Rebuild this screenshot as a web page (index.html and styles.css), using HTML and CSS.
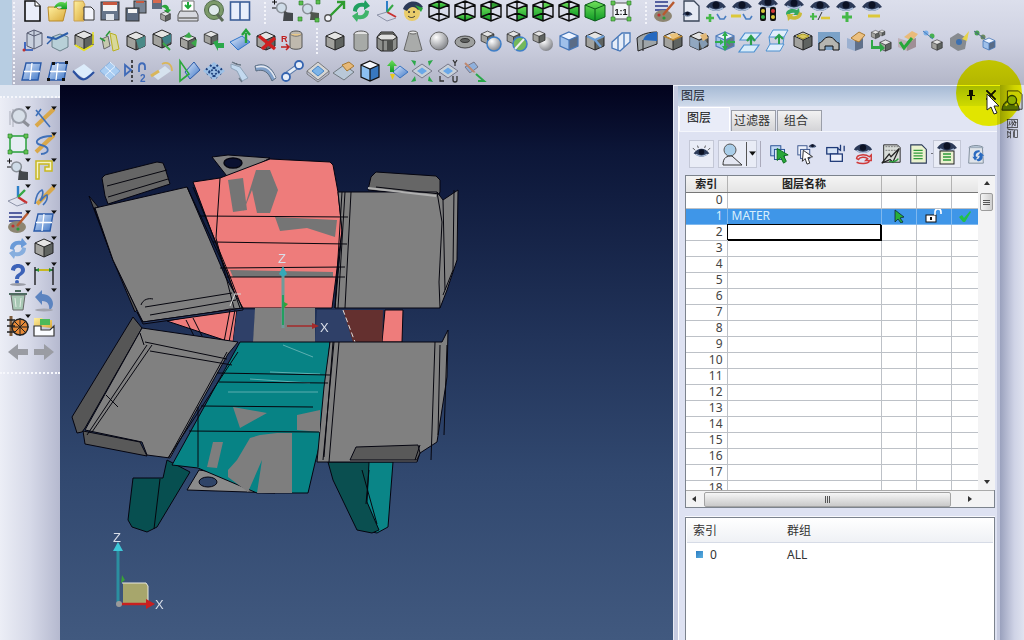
FILE: index.html
```html
<!DOCTYPE html>
<html lang="zh">
<head>
<meta charset="utf-8">
<title>图层</title>
<link rel="stylesheet" href="styles.css">
</head>
<body>
<svg class="defs" width="0" height="0">
<defs>
<linearGradient id="gb" x1="0" y1="0" x2="1" y2="1"><stop offset="0" stop-color="#dfe9fa"/><stop offset="1" stop-color="#3f78c8"/></linearGradient>
<linearGradient id="gg" x1="0" y1="0" x2="0" y2="1"><stop offset="0" stop-color="#6fe05a"/><stop offset="1" stop-color="#0f9a25"/></linearGradient>
<linearGradient id="gy" x1="0" y1="0" x2="1" y2="1"><stop offset="0" stop-color="#fff0a0"/><stop offset="1" stop-color="#d9a93a"/></linearGradient>
<radialGradient id="gs" cx=".35" cy=".3" r=".8"><stop offset="0" stop-color="#fff"/><stop offset="1" stop-color="#77797f"/></radialGradient>
<symbol id="cube" viewBox="0 0 24 24"><path d="M12 3l9 4-9 4-9-4z" fill="#e4e4e4"/><path d="M3 7l9 4v10l-9-4z" fill="#a2a29e"/><path d="M21 7l-9 4v10l9-4z" fill="#5f6360"/><path d="M12 3l9 4v10l-9 4-9-4V7zM3 7l9 4 9-4M12 11v10" fill="none" stroke="#222" stroke-width="1"/></symbol>
<symbol id="bcube" viewBox="0 0 24 24"><path d="M12 3l9 4-9 4-9-4z" fill="#eef4ff"/><path d="M3 7l9 4v10l-9-4z" fill="#9fc0ea"/><path d="M21 7l-9 4v10l9-4z" fill="#5a6c86"/><path d="M12 3l9 4v10l-9 4-9-4V7zM3 7l9 4 9-4M12 11v10" fill="none" stroke="#4576b8" stroke-width="1.2"/></symbol>
<symbol id="wc" viewBox="0 0 24 24"><path d="M12 2l10 4v12l-10 4-10-4V6zM2 6l10 4 10-4M12 10v12M2 18l10-4 10 4M12 2v12" fill="none" stroke="#0a0a0a" stroke-width="1.4"/></symbol>
<symbol id="eye" viewBox="0 0 24 24"><path d="M2 9c5-8 15-8 20 0-3 1-5 4-10 4S5 10 2 9z" fill="#2c3a58"/><path d="M5 10c4 3 10 3 14 0" fill="none" stroke="#a9bcd8" stroke-width="1.6"/><ellipse cx="12" cy="7" rx="3.5" ry="3.5" fill="#0c1224"/></symbol>
<symbol id="plane" viewBox="0 0 24 24"><path d="M6 4h15l-3 17H2z" fill="url(#gb)" stroke="#2a5aa8" stroke-width="1.4"/><path d="M4 12.5h16M12 4l-2 17" stroke="#fff" stroke-width="1.3"/></symbol>
<symbol id="mag" viewBox="0 0 24 24"><circle cx="10" cy="9" r="6.5" fill="#cfdce8" stroke="#8a9098" stroke-width="2"/><path d="M14 14l7 7" stroke="#555" stroke-width="3"/></symbol>
<symbol id="tri" viewBox="0 0 8 5"><path d="M0 0h8L4 5z" fill="#111"/></symbol>
<symbol id="arrow" viewBox="0 0 24 24"><path d="M12 2l8 8h-5v6H9v-6H4z" fill="url(#gg)" stroke="#0c7a1f" stroke-width=".8"/></symbol>
</defs>
</svg>

<div class="app">
<header class="toolbar">
<div class="tb-row first">
<i class="grip"></i>
<span class="cell"><svg class="ic" viewBox="0 0 24 24"><path d="M5 2h10l5 5v15H5z" fill="#eaeefa" stroke="#111" stroke-width="1.6"/><path d="M15 2v5h5" fill="#fff" stroke="#111"/></svg></span>
<span class="cell"><svg class="ic" viewBox="0 0 24 24"><path d="M2 8h8l2 2h8l-3 12H3z" fill="url(#gy)" stroke="#b98a2a"/><path d="M8 9c2-6 8-7 11-5l2-2v8h-7l2-2c-3-1-5 0-8 1z" fill="url(#gg)"/></svg></span>
<span class="cell"><svg class="ic" viewBox="0 0 24 24"><path d="M2 2h9l2 4-2 4 2 4-2 4 1 4H2z" fill="url(#gy)" stroke="#c9a050"/><path d="M12 8h7l3 3v10H12z" fill="#f1f3fa" stroke="#333"/></svg></span>
<span class="cell"><svg class="ic" viewBox="0 0 24 24"><rect x="3" y="3" width="18" height="18" fill="#66758a" stroke="#333"/><rect x="5" y="3" width="14" height="3" fill="#c85a40"/><rect x="5" y="6" width="14" height="6" fill="#f4f4f4"/><rect x="8" y="15" width="8" height="6" fill="#dfe3ea"/></svg></span>
<span class="cell"><svg class="ic" viewBox="0 0 24 24"><rect x="10" y="2" width="12" height="12" fill="#7a8595" stroke="#333"/><rect x="12" y="2" width="8" height="2" fill="#c85a40"/><rect x="2" y="9" width="13" height="13" fill="#5d6b80" stroke="#333"/><rect x="4" y="10" width="9" height="4" fill="#f4f4f4"/></svg></span>
<span class="cell"><svg class="ic" viewBox="0 0 24 24"><rect x="2" y="1" width="10" height="9" fill="#5d6b80"/><rect x="3" y="1" width="8" height="3" fill="#d56a50"/><path d="M11 8c3-4 8-2 8 2l2 1-4 4-3-4h2c0-2-3-3-5-3z" fill="#2aa83a"/><use href="#cube" x="9" y="11" width="13" height="13"/></svg></span>
<span class="cell"><svg class="ic" viewBox="0 0 24 24"><path d="M4 12h16l2 4v6H2v-6z" fill="#d7d9df" stroke="#555"/><path d="M6 2h12v10H6z" fill="#fff" stroke="#777"/><path d="M12 3v5M9 6l3 3 3-3" stroke="#1fa83a" stroke-width="2" fill="none"/><rect x="2" y="18" width="20" height="2" fill="#888"/></svg></span>
<span class="cell"><svg class="ic" viewBox="0 0 24 24"><circle cx="12" cy="11" r="9.5" fill="#7c9a6a" stroke="#557050"/><circle cx="12" cy="11" r="5.5" fill="#dfe9ec" stroke="#456040"/><path d="M15 15l6 7" stroke="#5a6a56" stroke-width="3"/></svg></span>
<span class="cell"><svg class="ic" viewBox="0 0 24 24"><rect x="2.5" y="3" width="19" height="18" fill="#e8effb" stroke="#3c5f98" stroke-width="1.6"/><path d="M12 3v18" stroke="#3c5f98" stroke-width="1.6"/></svg></span>
<i class="grip"></i>
<span class="cell"><svg class="ic" viewBox="0 0 24 24"><path d="M1 3h5M3.500 .5v5M1 9h5" stroke="#111"/><use href="#mag" x="3" y="2" width="18" height="18"/><path d="M13 13l9 1v8H12z" fill="#44484c"/></svg></span>
<span class="cell"><svg class="ic" viewBox="0 0 24 24"><use href="#mag" x="3" y="3" width="18" height="18"/><path d="M14 13l8 1v7h-9z" fill="#50564f"/><path d="M2 2h4v4H2zM19 1h4v4h-4zM1 18h4v4H1zM18 19h4v4h-4z" fill="#5bbf4e" stroke="#2a7a2a" stroke-width=".6"/></svg></span>
<span class="cell"><svg class="ic" viewBox="0 0 24 24"><path d="M5 19L20 4M14 3h7v7" fill="none" stroke="#2e9c2f" stroke-width="2.4"/><circle cx="5" cy="19" r="3.200" fill="#f3f5fa" stroke="#555" stroke-width="1.400"/></svg></span>
<span class="cell"><svg class="ic" viewBox="0 0 24 24"><path d="M4 12C4 6 9 3 15 4l1-3 5 6-6 4 0-3c-4-1-7 1-7 5z" fill="#20a060"/><path d="M20 12c0 6-5 9-11 8l-1 3-5-6 6-4 0 3c4 1 7-1 7-5z" fill="#3fb46a"/></svg></span>
<span class="cell"><svg class="ic" viewBox="0 0 24 24"><path d="M12 13V2" stroke="#2d7fc8" stroke-width="2"/><path d="M12 13l9 5" stroke="#c83030" stroke-width="2"/><path d="M12 13l6-7" stroke="#35a845" stroke-width="2"/><path d="M12 13L2 16l10 6 9-3" fill="none" stroke="#8d93a8"/></svg></span>
<span class="cell"><svg class="ic" viewBox="0 0 24 24"><circle cx="11" cy="14" r="8" fill="#e9cc6a"/><path d="M2 10C5 1 17 0 22 8l-5 3c-3-4-8-4-11 1z" fill="#2c3a58"/><path d="M14 6l8 3-2 4" fill="#2aa83a"/><circle cx="8" cy="13" r="1" fill="#333"/><circle cx="13" cy="13" r="1" fill="#333"/><path d="M7 17c2 2 5 2 7 0" fill="none" stroke="#333"/></svg></span>
<span class="cell"><svg class="ic" viewBox="0 0 24 24"><path d="M12 2l10 4-10 4L2 6z" fill="url(#gg)"/><use href="#wc"/></svg></span>
<span class="cell"><svg class="ic" viewBox="0 0 24 24"><path d="M12 14l10 4-10 4-10-4z" fill="url(#gg)"/><use href="#wc"/></svg></span>
<span class="cell"><svg class="ic" viewBox="0 0 24 24"><path d="M2 6l10 4v12L2 18z" fill="url(#gg)"/><path d="M12 2l10 4-10 4z" fill="#2f9c2f"/><use href="#wc"/></svg></span>
<span class="cell"><svg class="ic" viewBox="0 0 24 24"><path d="M22 6l-10 4v12l10-4z" fill="url(#gg)"/><use href="#wc"/></svg></span>
<span class="cell"><svg class="ic" viewBox="0 0 24 24"><path d="M2 6l10 4v12L2 18zM12 2l10 4-10 4z" fill="url(#gg)"/><use href="#wc"/></svg></span>
<span class="cell"><svg class="ic" viewBox="0 0 24 24"><path d="M22 6l-10 4v4l10 4zM2 6l10-4v8z" fill="url(#gg)"/><use href="#wc"/></svg></span>
<span class="cell"><svg class="ic" viewBox="0 0 24 24"><path d="M12 2l10 4v12l-10 4-10-4V6z" fill="url(#gg)" stroke="#0a5a18"/><path d="M2 6l10 4 10-4M12 10v12" fill="none" stroke="#0a5a18"/></svg></span>
<span class="cell"><svg class="ic" viewBox="0 0 24 24"><rect x="4" y="4" width="16" height="16" fill="#f2f4f8" stroke="#555"/><path d="M2 2h4v4H2zM18 2h4v4h-4zM2 18h4v4H2zM18 18h4v4h-4z" fill="#63c452" stroke="#2a7a2a" stroke-width=".6"/><text class="one" x="12" y="16">1:1</text></svg></span>
<i class="grip"></i>
<span class="cell"><svg class="ic" viewBox="0 0 24 24"><path d="M3 3h13M3 7h13M3 11h13" stroke="#5560a0" stroke-width="2"/><ellipse cx="11" cy="17" rx="9" ry="6" fill="#8d8572"/><circle cx="7" cy="16" r="1.600" fill="#c03030"/><circle cx="12" cy="19" r="1.600" fill="#2a9a3a"/><path d="M22 3L11 16" stroke="#b85a30" stroke-width="2.400"/></svg></span>
<span class="cell"><svg class="ic" viewBox="0 0 24 24"><path d="M6 2h10l5 5v15H6z" fill="#e6eaf4" stroke="#3a4658" stroke-width="1.300"/><use href="#eye" x="2" y="11" width="15" height="12"/></svg></span>
<span class="cell"><svg class="ic" viewBox="0 0 24 24"><use href="#eye" y="-1"/><path d="M6 15v8M2 19h8" stroke="#45b848" stroke-width="2.600"/><path d="M13 15l3 5h4l2-3" fill="none" stroke="#4a7ec0" stroke-width="1.600"/></svg></span>
<span class="cell"><svg class="ic" viewBox="0 0 24 24"><use href="#eye" y="-1"/><path d="M1 17h10" stroke="#dcc83a" stroke-width="3"/><path d="M13 15l3 5h4l2-3" fill="none" stroke="#4a7ec0" stroke-width="1.600"/></svg></span>
<span class="cell"><svg class="ic" viewBox="0 0 24 24"><use href="#eye" y="-4"/><rect x="4" y="8" width="6" height="14" rx="2" fill="#111"/><rect x="14" y="8" width="6" height="14" rx="2" fill="#111"/><circle cx="7" cy="12" r="2" fill="#d8c83a"/><circle cx="7" cy="18" r="2" fill="#3ab848"/><circle cx="17" cy="12" r="2" fill="#d83a3a"/><circle cx="17" cy="18" r="2" fill="#d8c83a"/></svg></span>
<span class="cell"><svg class="ic" viewBox="0 0 24 24"><use href="#eye" y="-3"/><path d="M4 15c0-5 7-6 11-4l2-2 1 7-7 0 2-2c-3-1-6 0-7 4z" fill="#34a860"/><path d="M20 14c0 6-7 8-12 6l-2 2-1-7 7 0-2 2c3 1 6 0 7-4z" fill="#c9bb3a"/></svg></span>
<span class="cell"><svg class="ic" viewBox="0 0 24 24"><use href="#eye" y="-1"/><path d="M5 14v7M2 17.500h7" stroke="#45b848" stroke-width="2.200"/><path d="M10 21l4-8" stroke="#333"/><path d="M13 19h9" stroke="#dcc83a" stroke-width="2.600"/></svg></span>
<span class="cell"><svg class="ic" viewBox="0 0 24 24"><use href="#eye" y="-1"/><path d="M13 13v10M8 18h10" stroke="#45b848" stroke-width="3"/></svg></span>
<span class="cell"><svg class="ic" viewBox="0 0 24 24"><use href="#eye" y="-1"/><path d="M8 17h12" stroke="#dcc83a" stroke-width="3"/></svg></span>
</div>

<div class="tb-row">
<i class="grip"></i>
<span class="cell"><svg class="ic" viewBox="0 0 24 24"><path d="M7 4l7-3 8 3v12l-8 4-7-3z" fill="#c8d0de" stroke="#555a70"/><path d="M14 1v19M7 4l7 3 8-3" stroke="#555a70" fill="none"/><path d="M5 13v8h8" stroke="#2050b8" stroke-width="1.600" fill="none"/><circle cx="4" cy="21" r="1.500" fill="#c03030"/></svg></span>
<span class="cell"><svg class="ic" viewBox="0 0 24 24"><path d="M6 8l8-3 8 3v10l-8 4-8-4z" fill="#b8d0d8" stroke="#69808a"/><path d="M1 8l9 2 12-6" fill="none" stroke="#2a5ca8" stroke-width="2"/><path d="M1 15l7-7" stroke="#2a5ca8" stroke-width="1.400"/></svg></span>
<span class="cell"><svg class="ic" viewBox="0 0 24 24"><use href="#cube" y="-1"/><path d="M3 16l9 5 9-5" fill="none" stroke="#e6e020" stroke-width="2"/><path d="M21 3v12" stroke="#e6e020" stroke-width="1.500"/></svg></span>
<span class="cell"><svg class="ic" viewBox="0 0 24 24"><path d="M4 10l6-3 2 10-6 3z" fill="#c5c9ae" stroke="#666"/><path d="M12 4l6 2 3 14-6 2z" fill="#d8d89a" stroke="#b8b020"/><path d="M8 7l4-5M2 9l5 3" stroke="#2a9a3a" stroke-width="1.500"/></svg></span>
<span class="cell"><svg class="ic" viewBox="0 0 24 24"><use href="#cube"/><path d="M12 11l9-4v10l-6 3z" fill="#4a8a88"/></svg></span>
<span class="cell"><svg class="ic" viewBox="0 0 24 24"><use href="#cube" y="-2"/><path d="M12 9l9-4v8l-6 3z" fill="#3f8088"/><path d="M13 14l7 7" stroke="#3aa848" stroke-width="2"/></svg></span>
<span class="cell"><svg class="ic" viewBox="0 0 24 24"><use href="#cube" x="2" y="3" width="20" height="20"/><path d="M8 8l5-5 3 5-3 1zM15 14l6-4-1 8z" fill="#3aa848"/></svg></span>
<span class="cell"><svg class="ic" viewBox="0 0 24 24"><use href="#cube" x="0" y="0" width="18" height="18"/><path d="M11 13l5-2v3h6v5h-6v3z" fill="#2aa84a"/></svg></span>
<span class="cell"><svg class="ic" viewBox="0 0 24 24"><path d="M2 13l12-6 8 6-12 8z" fill="url(#gb)" stroke="#2f74c8"/><path d="M18 14V4M14 6l4-5 4 5" stroke="#25a23a" stroke-width="2.400" fill="none"/></svg></span>
<span class="cell"><svg class="ic" viewBox="0 0 24 24"><use href="#cube"/><path d="M5 7l16 13M21 9L8 20" stroke="#d02020" stroke-width="3.400"/></svg></span>
<span class="cell"><svg class="ic" viewBox="0 0 24 24"><path d="M10 5c0-4 12-4 12 0v13c0 3-12 3-12 0z" fill="#bfb9ae" stroke="#555"/><path d="M10 5c3 3 9 3 12 0" fill="#e9c88a" stroke="#777"/><text class="redr" x="1" y="13">R</text><path d="M1 18h8M6 15l3 3-3 3" stroke="#c02020" fill="none" stroke-width="1.500"/></svg></span>
<i class="grip"></i>
<span class="cell"><svg class="ic" viewBox="0 0 24 24"><use href="#cube"/></svg></span>
<span class="cell"><svg class="ic" viewBox="0 0 24 24"><ellipse cx="12" cy="5" rx="7" ry="3" fill="#e2e2e2" stroke="#555"/><path d="M5 5v14c0 4 14 4 14 0V5" fill="#a7aaa7" stroke="#555"/></svg></span>
<span class="cell"><svg class="ic" viewBox="0 0 24 24"><path d="M6 3h12l4 5v11l-4 3H6l-4-3V8z" fill="#8d8f8c" stroke="#222"/><path d="M2 8l4 3h12l4-3-4-3H6zM8 11v11" fill="#e0e0e0" stroke="#222"/><path d="M12 11h6v11h-6z" fill="#4e504e"/></svg></span>
<span class="cell"><svg class="ic" viewBox="0 0 24 24"><path d="M8 3h8l5 18c-5 2-13 2-18 0z" fill="#a9abaa" stroke="#666"/><ellipse cx="12" cy="3.500" rx="4" ry="1.500" fill="#e6e6e6" stroke="#666"/></svg></span>
<span class="cell"><svg class="ic" viewBox="0 0 24 24"><circle cx="12" cy="12" r="9" fill="url(#gs)" stroke="#666"/></svg></span>
<span class="cell"><svg class="ic" viewBox="0 0 24 24"><ellipse cx="12" cy="13" rx="10" ry="6" fill="#9ea09f" stroke="#444"/><ellipse cx="12" cy="11.500" rx="4.500" ry="2" fill="#5e605f" stroke="#333"/></svg></span>
<span class="cell"><svg class="ic" viewBox="0 0 24 24"><use href="#cube" width="17" height="17"/><circle cx="15" cy="15" r="7" fill="url(#gs)" stroke="#3f7fc8" stroke-width="1.500"/></svg></span>
<span class="cell"><svg class="ic" viewBox="0 0 24 24"><use href="#cube" width="17" height="17"/><circle cx="15" cy="15" r="7" fill="#74b85a" stroke="#3f7fc8" stroke-width="1.500"/><path d="M10 20L19 10" stroke="#eee" stroke-width="2"/></svg></span>
<span class="cell"><svg class="ic" viewBox="0 0 24 24"><circle cx="15" cy="15" r="7" fill="url(#gs)"/><use href="#cube" width="16" height="16"/></svg></span>
<span class="cell"><svg class="ic" viewBox="0 0 24 24"><use href="#bcube"/></svg></span>
<span class="cell"><svg class="ic" viewBox="0 0 24 24"><use href="#cube"/><path d="M4 7l8 4 9-4M12 11l6 7" fill="none" stroke="#6ea0d8" stroke-width="2.400"/></svg></span>
<span class="cell"><svg class="ic" viewBox="0 0 24 24"><path d="M3 13l10-9 8 0 0 9-10 9-8-3z" fill="#e6edf8" stroke="#4878b8" stroke-width="1.300"/><path d="M9 8v14M15 5v13" stroke="#4878b8" stroke-width="1.300"/></svg></span>
<span class="cell"><svg class="ic" viewBox="0 0 24 24"><path d="M2 9c5-4 12-6 20-6v12L3 22z" fill="#9fa5a8" stroke="#222"/><path d="M8 11c2-6 9-8 14-8v9z" fill="#2468c0"/><path d="M8 11v11" stroke="#222"/></svg></span>
<span class="cell"><svg class="ic" viewBox="0 0 24 24"><use href="#cube"/><path d="M8 5l8-1 3 4-7 3z" fill="#eac27a"/><path d="M3 7l9 4 9-4" fill="none" stroke="#c08a30" stroke-width="1.500"/></svg></span>
<span class="cell"><svg class="ic" viewBox="0 0 24 24"><use href="#cube"/><path d="M3 8l9 4v9l-9-4zM12 12l5-2 4 5-6 5z" fill="#8da9c8" opacity=".8"/><path d="M13 6l6-2 2 5-5 3z" fill="#e2b878"/></svg></span>
<span class="cell"><svg class="ic" viewBox="0 0 24 24"><use href="#bcube" opacity=".9"/><path d="M12 2l3 5h-2v10h2l-3 5-3-5h2V7H9zM2 12h5v-2l4 3-4 3v-2H2z" fill="#2fae4e"/><path d="M22 12h-5v-2l-4 3 4 3v-2h5z" fill="#2fae4e"/></svg></span>
<span class="cell"><svg class="ic" viewBox="0 0 24 24"><path d="M6 4h16l-6 7H1zM5 16h15l-5 7H0z" fill="#d8ecfa" stroke="#4a90d0" stroke-width="1.200"/><path d="M12 16V9M8 12l4-5 4 5" stroke="#2aa04a" stroke-width="2.200" fill="none"/></svg></span>
<span class="cell"><svg class="ic" viewBox="0 0 24 24"><path d="M8 1h15l-4 7H4zM5 15h14l-4 7H1z" fill="#e2eefb" stroke="#4a90d0"/><path d="M4 8l1 7M19 8l-1 7" stroke="#4a90d0"/><path d="M14 15V7M10 10l4-4 4 4" stroke="#2aa04a" stroke-width="2" fill="none"/></svg></span>
<span class="cell"><svg class="ic" viewBox="0 0 24 24"><use href="#cube"/><path d="M12 5l6 2-6 3-6-3z" fill="#d8c860" stroke="#a89820"/></svg></span>
<span class="cell"><svg class="ic" viewBox="0 0 24 24"><rect x="1" y="3" width="22" height="18" fill="#7ba2c8"/><path d="M2 21v-7c4 0 4-6 10-6s6 6 10 6v7h-6v-4H8v4z" fill="#b5b5b0" stroke="#111"/></svg></span>
<span class="cell"><svg class="ic" viewBox="0 0 24 24"><path d="M4 9l8 3v10l-8-3z" fill="#9bb0d0"/><path d="M20 9l-8 3v10l8-3z" fill="#60708a"/><path d="M8 9l8-6 6 3-6 7-5-2z" fill="#ecc080" stroke="#a87830"/></svg></span>
<span class="cell"><svg class="ic" viewBox="0 0 24 24"><use href="#cube" x="9" y="9" width="15" height="15"/><use href="#cube" x="1" y="0" width="11" height="11"/><use href="#cube" x="9" y="0" width="8" height="8"/><path d="M4 11v6h7v-3l5 5-5 4v-3H2v-9z" fill="#2fa845"/></svg></span>
<span class="cell"><svg class="ic" viewBox="0 0 24 24"><path d="M3 9l9 3v10l-9-4z" fill="#c0b0b8"/><path d="M21 9l-9 3v10l9-4z" fill="#9f8f96"/><path d="M9 8l8-6 6 3-6 7z" fill="#e9bb7a"/><path d="M5 13l4 6 8-10" fill="none" stroke="#28a83a" stroke-width="3"/></svg></span>
<span class="cell"><svg class="ic" viewBox="0 0 24 24"><use href="#cube" x="9" y="9" width="14" height="14"/><circle cx="5" cy="4" r="2.500" fill="#7ab0e8"/><circle cx="11" cy="7" r="2.500" fill="#46b050"/><path d="M2 2l10 8" stroke="#4a7ab8"/></svg></span>
<span class="cell"><svg class="ic" viewBox="0 0 24 24"><path d="M3 9l8-5 9 5-2 11-7 2-8-5z" fill="#878b90"/><circle cx="12" cy="13" r="3" fill="#3c70b0"/><path d="M15 10l7-8-2 10z" fill="#e6d34a"/></svg></span>
<span class="cell"><svg class="ic" viewBox="0 0 24 24"><use href="#bcube" x="8" y="7" width="16" height="16"/><circle cx="4" cy="4" r="2.500" fill="#46a050"/><circle cx="10" cy="8" r="2.500" fill="#6a8a60"/><path d="M1 2l11 8" stroke="#4a6a88"/></svg></span>
</div>

<div class="tb-row">
<i class="grip"></i>
<span class="cell"><svg class="ic" viewBox="0 0 24 24"><use href="#plane"/></svg></span>
<span class="cell"><svg class="ic" viewBox="0 0 24 24"><use href="#plane"/><path d="M6 3h3v3H6zM19 2h3v3h-3zM1 19h3v3H1zM16 19h3v3h-3z" fill="#111"/></svg></span>
<span class="cell"><svg class="ic" viewBox="0 0 24 24"><path d="M1 12l11-7 10 8-9 7z" fill="#dcecfb"/><path d="M1 12c3 2 6 10 12 8 3-1 7-5 9-7" fill="none" stroke="#2a50a0" stroke-width="2.200"/></svg></span>
<span class="cell"><svg class="ic" viewBox="0 0 24 24"><path d="M2 12l10-9 10 9-10 9z" fill="#a9cdf2" stroke="#8ab0dc"/><path d="M7 7.500l10 9M12 3l5 4.500M17 7.500L7 16.500M12 21l-5-4.500" stroke="#e8f2ff"/></svg></span>
<span class="cell"><svg class="ic" viewBox="0 0 24 24"><path d="M8 1v22" stroke="#111" stroke-width="1.400" stroke-dasharray="3 2"/><path d="M1 6l6 5-6 5zM15 13V8c0-5 6-5 6 0v3" fill="none" stroke="#3f6ab8" stroke-width="1.800"/><text class="num" x="16" y="23">2</text></svg></span>
<span class="cell"><svg class="ic" viewBox="0 0 24 24"><path d="M2 16l13-9 6 5-13 9z" fill="#d6e2ee"/><path d="M12 5c5-3 10 0 10 7" fill="none" stroke="#d9b65a" stroke-width="1.800"/><path d="M1 17l8-5" stroke="#d9b65a" stroke-width="3"/></svg></span>
<span class="cell"><svg class="ic" viewBox="0 0 24 24"><path d="M9 13l9-10 6 8-10 9z" fill="url(#gb)" stroke="#2a5aa8"/><path d="M4 2v20l9-7z" fill="none" stroke="#2aa83a" stroke-width="1.600"/></svg></span>
<span class="cell"><svg class="ic" viewBox="0 0 24 24"><path d="M1 12L12 3l11 9-11 9z" fill="#9cc0e6"/><path d="M4 9.500l11 9.500M8 6l11 9.500M16 6L5 15.500M20 9.500L9 19" stroke="#1d3f7c" stroke-width="1.800" stroke-dasharray="2 1.500"/></svg></span>
<span class="cell"><svg class="ic" viewBox="0 0 24 24"><path d="M3 5l9 3 8 11-6 3-5-10-6-3z" fill="#c3d9ef" stroke="#8fa3b8"/><path d="M4 3c3 2 6 3 9 3M11 19l3 4" stroke="#6c7a88" stroke-width="1.400"/></svg></span>
<span class="cell"><svg class="ic" viewBox="0 0 24 24"><path d="M1 7c8-3 16-1 21 12l-4 3C14 12 9 10 2 12z" fill="#7f9fc8" stroke="#5a6c80"/><path d="M2 8c8-2 14 0 19 11" fill="none" stroke="#e5e8f0" stroke-width="1.600"/></svg></span>
<span class="cell"><svg class="ic" viewBox="0 0 24 24"><path d="M7 15L18 7" stroke="#5878a8" stroke-width="5"/><path d="M7 15L18 7" stroke="#e6edf6" stroke-width="2.800"/><circle cx="6" cy="18" r="4" fill="#e8eef8" stroke="#3564b0" stroke-width="1.800"/><circle cx="19" cy="6" r="4" fill="#e8eef8" stroke="#3564b0" stroke-width="1.800"/></svg></span>
<span class="cell"><svg class="ic" viewBox="0 0 24 24"><path d="M1 12l11-9 11 9-11 9z" fill="#d6d6d4" stroke="#77797d"/><path d="M6 12l6-5 6 5-6 5z" fill="#7cb4e8" stroke="#4a88c8"/><path d="M1 12v3l11 8 11-8v-3" fill="none" stroke="#77797d"/></svg></span>
<span class="cell"><svg class="ic" viewBox="0 0 24 24"><path d="M1 14l11-8 10 7-10 8z" fill="#b9c8d8" stroke="#70787e"/><path d="M10 6l7-3 5 4-7 5z" fill="#e6b878" stroke="#a87830"/></svg></span>
<span class="cell"><svg class="ic" viewBox="0 0 24 24"><path d="M12 2l9 4-9 4-9-4z" fill="#f6f8fc"/><path d="M3 6l9 4v12l-9-4z" fill="#8cc0f0"/><path d="M21 6l-9 4v12l9-4z" fill="#3878c0"/><path d="M12 2l9 4v12l-9 4-9-4V6zM3 6l9 4 9-4M12 10v12" fill="none" stroke="#111" stroke-width="1.200"/></svg></span>
<span class="cell"><svg class="ic" viewBox="0 0 24 24"><path d="M9 13l7-6 8 6-8 6z" fill="url(#gb)" stroke="#3a74c0"/><path d="M3 7l5-6 5 6h-3v6H6V7z" fill="url(#gg)"/><path d="M6 15h5l-2.500 6z" fill="#e6c820"/></svg></span>
<span class="cell"><svg class="ic" viewBox="0 0 24 24"><path d="M2 12l10-7 10 7-10 7z" fill="#c8d0d8" stroke="#778"/><path d="M7 12l5-3.500 5 3.500-5 3.500z" fill="#6aa8e8"/><path d="M1 1l5 1-1 5zM23 1l-5 1 1 5zM1 23l5-1-1-5zM23 23l-5-1 1-5z" fill="#2ca84a"/></svg></span>
<span class="cell"><svg class="ic" viewBox="0 0 24 24"><path d="M2 12l10-7 10 7-10 7z" fill="#c8d0d8" stroke="#778"/><path d="M7 12l5-3.500 5 3.500-5 3.500z" fill="#6aa8e8"/><path d="M17 1l2 3 2-3M19 4v3M4 17v5h4M17 17v4a2 2 0 0 0 4 0v-4" fill="none" stroke="#333" stroke-width="1.300"/></svg></span>
<span class="cell"><svg class="ic" viewBox="0 0 24 24"><path d="M3 8l9-5 4 5-8 6z" fill="#8fb0dc" stroke="#778"/><path d="M3 4l10 10" stroke="#c08a70" stroke-width="2"/><path d="M7 14l10-1 5 4-9 4z" fill="#b7bfc8"/><path d="M14 15l8 7h-6" fill="none" stroke="#2aa84a" stroke-width="2"/></svg></span>
</div>
</header>

<div class="main">
<aside class="sidebar">
<div class="side-grip"></div>
<div class="side-grid">
<span class="cell2"><svg class="ic" viewBox="0 0 24 24"><path d="M4 5v14M7 3v18" stroke="#a9adb8"/><circle cx="13" cy="10" r="7" fill="#d7dfe8" stroke="#9ba0ab" stroke-width="2"/><path d="M17 15l6 5" stroke="#8c8f98" stroke-width="3"/></svg><svg class="drop" viewBox="0 0 8 5"><use href="#tri"/></svg></span>
<span class="cell2"><svg class="ic" viewBox="0 0 24 24"><path d="M4 20L22 3" stroke="#d9a84a" stroke-width="4"/><path d="M4 4l14 17M9 3l-5 7" stroke="#3f70b8" stroke-width="1.600" fill="none"/></svg><svg class="drop" viewBox="0 0 8 5"><use href="#tri"/></svg></span>
<span class="cell2"><svg class="ic" viewBox="0 0 24 24"><rect x="4" y="4" width="16" height="16" fill="#e6edf4" stroke="#27a03a" stroke-width="1.500"/><path d="M2 2h4v4H2zM18 2h4v4h-4zM2 18h4v4H2zM18 18h4v4h-4z" fill="#63c452" stroke="#1f7a2a" stroke-width=".6"/></svg></span>
<span class="cell2"><svg class="ic" viewBox="0 0 24 24"><path d="M4 20L22 3" stroke="#d9a84a" stroke-width="4"/><path d="M20 4C6 4 0 11 9 13s9 8 0 9" stroke="#3f70b8" stroke-width="1.800" fill="none"/></svg><svg class="drop" viewBox="0 0 8 5"><use href="#tri"/></svg></span>
<span class="cell2"><svg class="ic" viewBox="0 0 24 24"><path d="M1 3h5M3.500 .5v5M1 9h5" stroke="#111"/><use href="#mag" x="3" y="2" width="18" height="18"/><path d="M13 13l9 1v8H12z" fill="#44484c"/></svg><svg class="drop" viewBox="0 0 8 5"><use href="#tri"/></svg></span>
<span class="cell2"><svg class="ic" viewBox="0 0 24 24"><path d="M4 3h16v10h-7v-4h4V6H7v15H4z" fill="#f4f2c8" stroke="#c8b820" stroke-width="1.500"/></svg><svg class="drop" viewBox="0 0 8 5"><use href="#tri"/></svg></span>
<span class="cell2"><svg class="ic" viewBox="0 0 24 24"><path d="M12 13V2" stroke="#2d7fc8" stroke-width="2.400"/><path d="M12 13l9 6" stroke="#c83030" stroke-width="2.400"/><path d="M12 13l7-7" stroke="#35a845" stroke-width="2.400"/><path d="M12 13L2 17l9 5 9-3" fill="none" stroke="#8d93a8"/></svg><svg class="drop" viewBox="0 0 8 5"><use href="#tri"/></svg></span>
<span class="cell2"><svg class="ic" viewBox="0 0 24 24"><path d="M5 20L22 3" stroke="#d9a84a" stroke-width="4"/><path d="M3 20c1-8 4-13 7-14 2 2 0 8-2 11 3-3 5-6 7-6 1 3-1 7-4 10" fill="none" stroke="#3f70b8" stroke-width="1.600"/></svg><svg class="drop" viewBox="0 0 8 5"><use href="#tri"/></svg></span>
<span class="cell2"><svg class="ic" viewBox="0 0 24 24"><path d="M3 3h13M3 7h13M3 11h13" stroke="#5560a0" stroke-width="2"/><ellipse cx="11" cy="17" rx="9" ry="6" fill="#8d8572"/><circle cx="7" cy="16" r="1.600" fill="#c03030"/><circle cx="12" cy="19" r="1.600" fill="#2a9a3a"/><path d="M22 3L11 16" stroke="#b85a30" stroke-width="2.400"/></svg><svg class="drop" viewBox="0 0 8 5"><use href="#tri"/></svg></span>
<span class="cell2"><svg class="ic" viewBox="0 0 24 24"><use href="#plane"/></svg><svg class="drop" viewBox="0 0 8 5"><use href="#tri"/></svg></span>
<span class="cell2"><svg class="ic" viewBox="0 0 24 24"><path d="M4 13C4 7 9 4 15 5l1-3 5 6-6 4v-3c-4-1-7 1-7 5z" fill="#6a9ad8"/><path d="M20 12c0 6-5 9-11 8l-1 3-5-6 6-4v3c4 1 7-1 7-5z" fill="#87aede"/></svg><svg class="drop" viewBox="0 0 8 5"><use href="#tri"/></svg></span>
<span class="cell2"><svg class="ic" viewBox="0 0 24 24"><use href="#cube"/></svg><svg class="drop" viewBox="0 0 8 5"><use href="#tri"/></svg></span>
<span class="cell2"><svg class="ic" viewBox="0 0 24 24"><path d="M5 8c0-8 14-8 14 0 0 5-6 5-6 9h-4c0-6 6-5 6-9 0-3-6-3-6 1z" fill="#3c62b8"/><circle cx="11" cy="20" r="2" fill="#3c62b8"/><ellipse cx="12" cy="22.500" rx="8" ry="1.500" fill="#9a9ca6"/></svg><svg class="drop" viewBox="0 0 8 5"><use href="#tri"/></svg></span>
<span class="cell2"><svg class="ic" viewBox="0 0 24 24"><path d="M3 5v18M21 5v18M3 8h18" stroke="#111" stroke-width="1.300"/><path d="M3 8l4-2v4zM21 8l-4-2v4z" fill="#2a8a3a"/><path d="M7 8h10" stroke="#c8b820" stroke-width="2"/></svg><svg class="drop" viewBox="0 0 8 5"><use href="#tri"/></svg></span>
<span class="cell2"><svg class="ic" viewBox="0 0 24 24"><path d="M5 7h14l-2 15H7z" fill="#a7c7b4" stroke="#666"/><path d="M3 6h18M9 3h6" stroke="#4d6a60" stroke-width="2"/><path d="M9 10l1 9M15 10l-1 9" stroke="#e2ebe4"/></svg><svg class="drop" viewBox="0 0 8 5"><use href="#tri"/></svg></span>
<span class="cell2"><svg class="ic" viewBox="0 0 24 24"><path d="M3 9l7-7v4c6 0 11 4 11 10 0 3-2 5-4 7 1-6-1-10-7-10v4z" fill="#5c84c0"/><ellipse cx="12" cy="22" rx="9" ry="1.500" fill="#a2a4ae"/></svg><svg class="drop" viewBox="0 0 8 5"><use href="#tri"/></svg></span>
<span class="cell2"><svg class="ic" viewBox="0 0 24 24"><path d="M5 2v20" stroke="#7c5a3a" stroke-width="3"/><circle cx="14" cy="13" r="8" fill="#e78a38" stroke="#222" stroke-width="1.400"/><path d="M14 4v18M5 13h18M8 7l12 12M20 7L8 19" stroke="#222"/><path d="M1 6h8M1 12h8M1 18h8" stroke="#222" stroke-width="1.500"/></svg><svg class="drop" viewBox="0 0 8 5"><use href="#tri"/></svg></span>
<span class="cell2"><svg class="ic" viewBox="0 0 24 24"><path d="M2 12V4h8l2 2h8v8z" fill="url(#gy)"/><path d="M8 5h10v6H8z" fill="#4cb95a"/><path d="M2 12h7v4h9l4-4v10H2z" fill="#fafcff" stroke="#333" stroke-width="1.200"/></svg></span>
<span class="cell2"><svg class="ic" viewBox="0 0 24 24"><path d="M2 12l10-8v5h10v6H12v5z" fill="#9a9ca3"/></svg></span>
<span class="cell2"><svg class="ic" viewBox="0 0 24 24"><path d="M22 12L12 4v5H2v6h10v5z" fill="#9a9ca3"/></svg></span>
</div>
<div class="side-grip lower"></div>
</aside>

<div class="viewport">
<svg class="scene" viewBox="60 85 612 555" preserveAspectRatio="none">
<g stroke="#050510" stroke-width="1" stroke-linejoin="round">
<!-- upper model -->
<path d="M212 157l16-2 42 3-40 22z" fill="#808080"/>
<ellipse cx="233" cy="163" rx="9" ry="5" fill="#0a1030" stroke-width="1.400"/>
<path d="M193 182l27-4 50-19 60 3 3 3 5 27 4 38-10 78H240z" fill="#ee7c7b"/>
<path d="M102 178l3-3 52-13 6 1 2 5 5 16-62 20-3-8z" fill="#666"/>
<path d="M368 190l3-13 5-5 60 4 4 4 0 12-3 5z" fill="#666"/>
<path d="M89 196l10 12-5 0 19 52 24 50-2 2-22-52z" fill="#555"/>
<path d="M95 208l92-21 12 28 27 63 17 30-100 14-6-12-24-50z" fill="#808080"/>
<path d="M338 192h99l6 8 15-10-1 70-10 30-7 18H335l7-78z" fill="#808080"/>
<path d="M167 321l63-12 7 0-4 34-66-22zM385 310h18l-1 32h-20z" fill="#ee7c7b"/>
<path d="M237 310h18l-2 32h-20zM317 310h26l10 32h-38z" fill="#2f4068" stroke="none"/>
<path d="M255 308h60v34h-62z" fill="#808080" stroke="none"/>
<path d="M343 310h40l-1 32h-29z" fill="#64302f" stroke="none"/>
<path d="M137 312l6 10 100-14v2l-100 14z" fill="#2a3c64"/>
</g>
<g fill="#757575">
<path d="M228 180l15-2 4 32-14 2z"/>
<path d="M256 170l14 0 8 20-8 23-13 0-5-23-9 22z"/>
<path d="M275 217l62 3-2 17-28-9-27 3zM230 270l103 2v5l-100 0z"/>
</g>
<g fill="none" stroke="#06060e" stroke-width="1">
<path d="M200 216l148 1M213 242l134 2M220 268l125-1M227 277l118 0"/>
<path d="M187 187l40 85 13 36M193 187l36 87 13 34"/>
<path d="M220 178l-4 60 18 70M342 192l-7 116M345 192l-7 116M351 192l-6 116"/>
<path d="M145 307l87-14M150 315l86-15M141 305c2-6 8-7 12-6"/>
<path d="M437 192l5 30-3 60 1 26M443 200l2 90M454 190l-1 80-10 25"/>
<path d="M107 186l60-16M108 197l60-18M376 187l64 7"/>
<path d="M230 310l-6 32M235 310l-6 32M186 320l10 20M193 318l10 20"/>
</g>
<path d="M368 188l68 8" stroke="#b0b0b0" stroke-width="2"/>
<path d="M235 294l-5 12M234 294h7" stroke="#d5d5d5" fill="none"/>
<path d="M343 310l12 32" stroke="#ddd" stroke-dasharray="5 3" fill="none"/>

<!-- lower model -->
<g stroke="#050510" stroke-width="1" stroke-linejoin="round">
<path d="M133 478h30l4-18 23 12-33 55-10 5-15-5-4-7z" fill="#074f50"/>
<path d="M328 462h65l-5 65-11 6-15-3-24-50z" fill="#0a8587"/>
<path d="M328 462h41l-2 40 12 28-7 3-15-3-24-50z" fill="#0a4f50"/>
<path d="M199 470l-12 20 60 2 28 1-20-15z" fill="#8b8b8b"/>
<ellipse cx="208" cy="482" rx="9" ry="5" fill="#2f4468"/>
<path d="M240 342h90l-10 101-5 20-7 30-51 0-59-25-26-3z" fill="#078385"/>
<path d="M133 317l9 11-57 100-3 4-5 1-5-16z" fill="#565656"/>
<path d="M142 328l96 14-10 12-58 104-23-3-5-13-57-12z" fill="#808080"/>
<path d="M83 431l57 11 7 14-62-12z" fill="#595959"/>
<path d="M330 342h112l6-12-1 47-10 65-17 11-3 9-100 0 7-75z" fill="#808080"/>
<path d="M350 460l6-13 62-2 2 8-3 7z" fill="#595959"/>
</g>
<g fill="#7e7e7e">
<path d="M213 442l10 0-6 26-10-1z"/>
<path d="M228 470l9-10 13-22 10-3 17-2 15 0 0 60-35 0 5-33-14 32-20-15z"/>
<path d="M233 407l34 6-27 15zM297 415l23-5 0 22-23-2z"/>
</g>
<g fill="none" stroke="#d6efee" stroke-width=".7" opacity=".6">
<path d="M283 345l30 12M250 379l60 4M228 392l90 0M270 372l50 2"/>
</g>
<g fill="none" stroke="#06060e" stroke-width="1">
<path d="M217 373l113 2M219 382l109 1M201 406l112 1M189 431l130 1"/>
<path d="M227 352l-58 105M238 352l-70 106M198 407v60M333 342l-9 115M339 342l-10 120M334 342l-11 118"/>
<path d="M145 342l82 17M150 351l82 14M140 333l4 12M106 395l12 12"/>
<path d="M435 342l-4 118M440 345l-2 90M447 345l-3 90M420 445l-5 15"/>
<path d="M152 345l-60 87M147 345l-60 90"/>
<path d="M160 479l-6 50M362 470l15 54M369 470l-3 34"/>
</g>

<!-- centre triad -->
<path d="M283 272v56" stroke="#6f9c9a" stroke-width="3"/>
<path d="M283 295v30" stroke="#22a060" stroke-width="2"/>
<path d="M279 274l4-8 4 8-4 3z" fill="#35a9b8"/>
<path d="M284 302l4 2-4 4z" fill="#38a038"/>
<path d="M287 326h26" stroke="#a52a2a" stroke-width="1.500"/>
<path d="M312 323l7 3-7 3z" fill="#a52a2a"/>
<text class="axis" x="278" y="263">Z</text>
<text class="axis" x="320" y="332">X</text>

<!-- corner triad -->
<path d="M123 583h23l2 3v17h-25z" fill="#a7a66c"/>
<path d="M122 583h24l2 3M148 586v17" fill="none" stroke="#e8e8e0"/>
<path d="M118 547v57" stroke="#2b8fa0" stroke-width="3"/>
<path d="M113 551l5-9 5 9z" fill="#3ec8d8"/>
<path d="M122 575l-1 8 4-3z" fill="#38a038"/>
<path d="M121 604h28" stroke="#c82020" stroke-width="2.500"/>
<path d="M146 599l9 5-9 5z" fill="#c82020"/>
<circle cx="119" cy="604" r="3" fill="#9a9a9a"/>
<text class="axis" x="113" y="542">Z</text>
<text class="axis" x="155" y="609">X</text>
</svg>
</div>

<section class="panel">
<div class="titlebar">
<span class="title-text">图层</span>
<svg class="win-ic pin" viewBox="0 0 12 12"><path d="M4 1h4v5h2v1H7v4H5V7H2V6h2z" fill="#111"/></svg>
<svg class="win-ic close" viewBox="0 0 12 12"><path d="M2 1l4 4 4-4 1 1-4 4 4 4-1 1-4-4-4 4-1-1 4-4-4-4z" fill="#111" stroke="#111" stroke-width=".6"/></svg>
</div>
<nav class="tabs">
<span class="tab active">图层</span>
<span class="tab center">过滤器</span>
<span class="tab">组合</span>
</nav>
<div class="panel-body">
<div class="layer-tools">
<span class="pressed eye-btn"><svg class="ic sm" viewBox="0 0 24 24"><use href="#eye" y="3"/><path d="M4 8l-3-3M20 8l3-3M8 5L7 2M16 5l1-3" stroke="#333"/></svg></span>
<span class="pressed mag-btn"><svg class="ic" viewBox="0 0 24 24"><circle cx="10" cy="8" r="6" fill="#a9cde8" stroke="#555"/><path d="M3 23c0-8 4-9 9-9l10 9z" fill="#e4e7f2" stroke="#333"/></svg><span class="divider"></span><svg class="drop-lg" viewBox="0 0 8 5"><use href="#tri"/></svg></span>
<i class="vline"></i>
<svg class="ic lt" viewBox="0 0 24 24"><rect x="3" y="3" width="11" height="11" fill="#c0d8f4" stroke="#1f4a90"/><rect x="7" y="7" width="11" height="11" fill="#d6e4f6" stroke="#1f4a90"/><path d="M10 6l12 7-5 1 3 6-3 2-3-6-4 3z" fill="#28a83a" stroke="#0a6a1a"/></svg>
<svg class="ic lt" viewBox="0 0 24 24"><rect x="2" y="3" width="10" height="10" fill="#eef2fb" stroke="#34508a"/><rect x="5" y="7" width="10" height="10" fill="#eef2fb" stroke="#34508a"/><path d="M8 8l10 7-5 1 2 6-3 1-2-6-3 3z" fill="#fff" stroke="#222"/><use href="#eye" x="12" y="0" width="12" height="10"/></svg>
<svg class="ic lt" viewBox="0 0 24 24"><rect x="3" y="5" width="12" height="7" fill="#d6e4f6" stroke="#1f3a78" stroke-width="1.400"/><rect x="7" y="12" width="13" height="8" fill="#eef2fb" stroke="#1f3a78" stroke-width="1.400"/><path d="M18 2v6l-3-2M22 9V3" stroke="#1f3a78" stroke-width="1.400" fill="none"/></svg>
<svg class="ic lt" viewBox="0 0 24 24"><use href="#eye" y="-2"/><path d="M5 17c0-5 10-5 14-2l2-2v6h-6l2-2c-3-2-8-2-10 1zM19 20c-2 3-10 3-14 1" fill="none" stroke="#d03a3a" stroke-width="1.600"/></svg>
<svg class="ic lt" viewBox="0 0 24 24"><path d="M4 2h15l3 3v16H4z" fill="#d8dcd8" stroke="#222"/><path d="M6 4h14M6 8h14" stroke="#777" stroke-dasharray="2 1"/><path d="M2 22l8-10 2 3 9-9-7 15-3-3z" fill="none" stroke="#222" stroke-width="1.400"/><path d="M10 20c4 1 8 0 10-3" stroke="#2a9a3a" fill="none" stroke-width="1.400"/></svg>
<span class="doc"><svg class="ic lt" viewBox="0 0 24 24"><path d="M3 2h12l5 5v15H3z" fill="#eaf2cf" stroke="#2b3a5a" stroke-width="1.200"/><path d="M6 8h10M6 11h10M6 14h10M6 17h10" stroke="#2e9a3a" stroke-width="1.400"/></svg><svg class="drop-sm" viewBox="0 0 8 5"><use href="#tri"/></svg></span>
<span class="pressed clip-btn"><svg class="ic" viewBox="0 0 24 24"><use href="#eye" y="-3"/><rect x="5" y="9" width="14" height="13" fill="#eaf2cf" stroke="#222"/><path d="M8 12h8M8 15h8M8 18h8" stroke="#2e9a3a" stroke-width="1.400"/></svg></span>
<svg class="ic lt last-lt" viewBox="0 0 24 24"><path d="M5 5h14l1 17H4z" fill="#dfe4ea" stroke="#7c8a98"/><path d="M4 5c3-3 13-3 16 0" fill="#b8c8d8" stroke="#7c8a98"/><path d="M16 8c-5-1-8 3-6 7l-2 0 3 4 3-4-2 0c-1-3 1-5 4-5zM17 10l-3 4h2c0 2-1 4-4 4l2 2c4 0 6-3 5-6h2z" fill="#2a6ac0"/></svg>
</div>

<div class="grid-box">
<div class="grid-top">
<div class="grid-clip">
<table class="layers">
<colgroup><col class="c-idx"><col class="c-name"><col class="c-a"><col class="c-a"><col class="c-b"></colgroup>
<thead><tr><th>索引</th><th>图层名称</th><th></th><th></th><th></th></tr></thead>
<tbody>
<tr><td class="idx">0</td><td></td><td></td><td></td><td></td></tr>
<tr class="sel"><td class="idx">1</td><td>MATER</td><td class="center"><svg class="cellic" viewBox="0 0 14 14"><path d="M3 1l9 7-4 1 3 4-2 1-3-4-3 3z" fill="#28b03a" stroke="#0c2a3a" stroke-width=".8"/></svg></td><td class="center"><svg class="cellic wide-ic" viewBox="0 0 18 14"><rect x="1" y="6" width="10" height="7" fill="#fff" stroke="#111"/><rect x="5" y="8" width="2" height="3" fill="#111"/><path d="M10 6V3a3 3 0 0 1 6 0v2" fill="none" stroke="#fff" stroke-width="1.600"/></svg></td><td class="center"><svg class="cellic" viewBox="0 0 14 14"><path d="M1 8l3-2 2 3 6-7 1 1-6 10H5z" fill="#22c04a"/></svg></td></tr>
<tr><td class="idx">2</td><td class="editing"></td><td></td><td></td><td></td></tr>
<tr><td class="idx">3</td><td></td><td></td><td></td><td></td></tr>
<tr><td class="idx">4</td><td></td><td></td><td></td><td></td></tr>
<tr><td class="idx">5</td><td></td><td></td><td></td><td></td></tr>
<tr><td class="idx">6</td><td></td><td></td><td></td><td></td></tr>
<tr><td class="idx">7</td><td></td><td></td><td></td><td></td></tr>
<tr><td class="idx">8</td><td></td><td></td><td></td><td></td></tr>
<tr><td class="idx">9</td><td></td><td></td><td></td><td></td></tr>
<tr><td class="idx">10</td><td></td><td></td><td></td><td></td></tr>
<tr><td class="idx">11</td><td></td><td></td><td></td><td></td></tr>
<tr><td class="idx">12</td><td></td><td></td><td></td><td></td></tr>
<tr><td class="idx">13</td><td></td><td></td><td></td><td></td></tr>
<tr><td class="idx">14</td><td></td><td></td><td></td><td></td></tr>
<tr><td class="idx">15</td><td></td><td></td><td></td><td></td></tr>
<tr><td class="idx">16</td><td></td><td></td><td></td><td></td></tr>
<tr><td class="idx">17</td><td></td><td></td><td></td><td></td></tr>
<tr><td class="idx">18</td><td></td><td></td><td></td><td></td></tr>
</tbody>
</table>
</div>
<div class="vscroll">
<span class="arrow-up"></span>
<span class="v-thumb"><i></i><i></i><i></i></span>
<span class="arrow-down"></span>
</div>
</div>
<div class="hscroll">
<span class="arrow-left"></span>
<span class="h-thumb"><i></i><i></i><i></i></span>
<span class="arrow-right"></span>
</div>
</div>

<div class="splitter"></div>

<div class="group-box">
<div class="group-head"><span class="g-idx">索引</span><span>群组</span></div>
<div class="group-row"><span class="g-idx"><i class="swatch"></i>0</span><span>ALL</span></div>
</div>
</div>
</section>

<aside class="dock">
<svg class="dock-ic" viewBox="0 0 24 24"><path d="M7 1h12l4 4v16H7z" fill="#c9ced8" stroke="#333"/><path d="M1 22c1-8 5-11 10-11s8 4 9 11z" fill="#55702f" stroke="#222"/><path d="M5 17c3-4 9-4 12 0" fill="none" stroke="#c9c85a" stroke-width="2"/><circle cx="12" cy="11" r="5" fill="#8fb0c8" stroke="#2a3a48" stroke-width="1.400"/></svg>
<span class="dock-label">图层</span>
</aside>
</div>

<div class="spot"></div>
<svg class="cursor" viewBox="0 0 14 22"><path d="M1 1v16l4-3 3 7 3-1-3-7h5z" fill="#fff" stroke="#222" stroke-width="1"/></svg>
</div>
</body>
</html>
```

FILE: styles.css
```css
* { box-sizing: border-box; }
html, body { margin: 0; padding: 0; width: 1024px; height: 640px; overflow: hidden; }
body { font-family: "Noto Sans", "Noto Sans CJK SC", sans-serif; font-size: 12px; color: #222; }
.defs { display: block; height: 0; width: 0; }
i { font-style: normal; }

.app { position: relative; width: 1024px; height: 640px; display: flex; flex-direction: column; overflow: hidden; }

/* top toolbars */
.toolbar {
  height: 85px; flex: none; overflow: hidden;
  background: linear-gradient(90deg, #b7cde2 12px, transparent 12px), linear-gradient(180deg, #dcdfec 0, #cfd2e2 45%, #b3b6c8 100%);
}
.tb-row { height: 30px; display: flex; align-items: center; padding-left: 13px; }
.tb-row.first { margin-top: -4px; height: 30px; }
.cell { width: 26px; height: 26px; flex: none; display: flex; align-items: center; justify-content: center; }
.ic { width: 24px; height: 24px; display: block; overflow: visible; flex: none; filter: blur(.35px); }
.grip { width: 2px; height: 26px; flex: none; margin: 0 4px 0 11px; border-left: 2px dotted #f3f4fa; }
.tb-row > .grip:first-child { margin-left: 0; }
.one { font: bold 9px "Liberation Sans", sans-serif; text-anchor: middle; fill: #111; }
.redr { font: bold 9px "Liberation Sans", sans-serif; fill: #c02020; }
.num { font: bold 10px "Liberation Sans", sans-serif; fill: #3f6ab8; }

.main { flex: 1; min-height: 0; display: flex; }

/* left tool column */
.sidebar {
  width: 60px; flex: none;
  background: linear-gradient(90deg, #eceef6, #d6d9e8 50%, #b5b9cf);
  display: flex; flex-direction: column;
}
.side-grip { height: 13px; flex: none; background: #dde4f0; border-bottom: 2px dotted #f6f7fc; }
.side-grip.lower { height: 4px; margin-top: 5px; background: none; }
.side-grid { display: grid; grid-template-columns: 26px 26px; grid-auto-rows: 26px; padding: 7px 0 0 5px; }
.cell2 { position: relative; display: flex; align-items: center; justify-content: center; }
.drop { position: absolute; right: 0; top: 1px; width: 6px; height: 4px; }

/* viewport */
.viewport {
  width: 613px; flex: none;
  background: linear-gradient(180deg, #02031d 0, #0c1638 12%, #213359 45%, #31486f 70%, #41597f 100%);
}
.scene { display: block; width: 612px; height: 555px; filter: blur(.3px); }
.axis { font: 13px "Liberation Sans", sans-serif; fill: #d9dee8; }

/* right panel */
.panel {
  width: 327px; flex: none; display: flex; flex-direction: column;
  background: #c6cbe0;
  border-top: 1px solid #eef2fa;
  border-left: 1px solid #e8ebf4;
}
.titlebar {
  height: 20px; flex: none; margin-left: 4px; display: flex; align-items: center;
  background: linear-gradient(180deg, #a6bad5, #cfdaea);
  padding-left: 3px;
}
.title-text { font-size: 12px; color: #1c2530; flex: 1; line-height: 20px; }
.win-ic { width: 12px; height: 12px; flex: none; }
.pin { margin-right: 8px; margin-top: -3px; }
.close { margin-right: 3px; margin-top: -3px; }

.tabs { height: 25px; flex: none; display: flex; align-items: flex-end; gap: 1px; background: #e1e5f3; margin-left: 4px; margin-right: 3px; border-left: 1px solid #fff; }
.tab {
  width: 45px; height: 21px; padding-left: 6px; line-height: 20px; font-size: 12px; color: #333; white-space: nowrap;
  background: linear-gradient(180deg, #f2f2f2, #d3d3d6);
  border: 1px solid #9a9ea8; border-bottom: 0;
}
.tab.center { padding-left: 2px; }
.tab.active { width: 51px; height: 24px; padding-left: 7px; background: #e9ecf8; border-color: #fff; color: #111; line-height: 20px; }

.panel-body { flex: 1; min-height: 0; margin-left: 4px; margin-right: 3px; padding: 0 2px 0 6px; background: #dee2f2; border-left: 1px solid #fff; border-top: 1px solid #f4f6fc; display: flex; flex-direction: column; }
.layer-tools { height: 43px; flex: none; display: flex; align-items: center; padding-left: 4px; }
.pressed { height: 28px; display: flex; align-items: center; justify-content: center; background: #e9ecf6; border: 1px solid #fbfcff; outline: 1px solid #c3c7d6; outline-offset: -1px; flex: none; }
.eye-btn { width: 25px; }
.ic.sm { width: 19px; height: 19px; }
.mag-btn { width: 39px; margin-left: 4px; gap: 0; justify-content: flex-start; padding-left: 1px; }
.divider { width: 1px; height: 24px; background: #555; flex: none; margin: 0 2px; }
.drop-lg { width: 8px; height: 5px; }
.vline { width: 1px; height: 26px; background: #aab; margin: 0 7px 0 3px; flex: none; }
.lt { width: 22px; height: 22px; margin-right: 6px; }
.doc { display: flex; align-items: center; width: 25px; flex: none; }
.doc .lt { margin-right: 0; }
.drop-sm { width: 5px; height: 3px; margin-left: 1px; }
.clip-btn { width: 28px; }
.last-lt { margin-left: 4px; margin-right: 0; }

.grid-box { height: 333px; flex: none; background: #fff; border: 1px solid #7c838d; display: flex; flex-direction: column; }
.grid-top { flex: 1; min-height: 0; display: flex; }
.grid-clip { width: 292px; flex: none; overflow: hidden; }
.layers { border-collapse: collapse; table-layout: fixed; width: 292px; font-size: 12px; }
.c-idx { width: 41px; } .c-name { width: 154px; } .c-a { width: 35px; } .c-b { width: 27px; }
.layers th { height: 16px; padding: 0; font-weight: 700; font-size: 11px; line-height: 14px; background: linear-gradient(180deg, #f4f4f4, #e4e4e4); border-right: 1px solid #b2b2b2; border-bottom: 1px solid #777; text-align: center; color: #222; }
.layers td { height: 16px; padding: 0 4px; line-height: 14px; border-right: 1px solid #bdc1c7; border-bottom: 1px solid #bdc1c7; color: #444; }
.layers td.idx { text-align: right; padding-right: 4px; font-size: 12px; }
.layers .sel td { background: #3f96e8; color: #d8effc; border-color: #7fb8ee; }
.layers .sel td.center { text-align: center; padding: 0; }
.layers td.editing { border: 1px solid #000; outline: 1px solid #000; outline-offset: -1px; }
.cellic { width: 14px; height: 14px; display: inline-block; vertical-align: middle; }
.wide-ic { width: 18px; }
.vscroll { width: 17px; flex: none; background: #f3f3f4; display: flex; flex-direction: column; align-items: center; padding-top: 4px; }
.arrow-up { width: 0; height: 0; border: 3px solid transparent; border-bottom: 4px solid #333; border-top: 0; margin-top: 1px; }
.v-thumb { width: 13px; height: 18px; margin-top: 8px; background: linear-gradient(90deg, #f4f4f4, #cfcfcf); border: 1px solid #9c9c9c; border-radius: 2px; display: flex; flex-direction: column; align-items: center; justify-content: center; gap: 1px; }
.v-thumb i { width: 7px; height: 1px; background: #555; }
.arrow-down { width: 0; height: 0; border: 3px solid transparent; border-top: 4px solid #333; border-bottom: 0; margin-top: auto; margin-bottom: 6px; }
.hscroll { height: 17px; flex: none; background: #f3f3f4; display: flex; align-items: center; border-top: 1px solid #aaa; }
.arrow-left { width: 0; height: 0; border: 3px solid transparent; border-right: 4px solid #333; border-left: 0; margin-left: 6px; }
.h-thumb { width: 247px; height: 15px; margin-left: 8px; background: linear-gradient(180deg, #f6f6f6, #c9c9c9); border: 1px solid #a3a3a3; border-radius: 2px; display: flex; align-items: center; justify-content: center; gap: 1px; }
.h-thumb i { width: 1px; height: 7px; background: #555; }
.arrow-right { width: 0; height: 0; border: 3px solid transparent; border-left: 4px solid #333; border-right: 0; margin-left: 17px; }

.splitter { height: 9px; flex: none; border-bottom: 1px solid #f8f9fd; }
.group-box { flex: 1; min-height: 0; background: #fff; border: 1px solid #7c838d; border-bottom: 0; }
.group-head { height: 25px; display: flex; align-items: center; background: linear-gradient(180deg, #fff, #eff1f5); border-bottom: 1px solid #d6dbe6; margin: 0 1px; color: #333; }
.group-row { height: 22px; display: flex; align-items: center; color: #333; margin: 0 1px; }
.g-idx { width: 100px; padding-left: 6px; flex: none; display: flex; align-items: center; }
.group-row .g-idx { padding-left: 9px; }
.swatch { width: 7px; height: 7px; background: linear-gradient(135deg, #2b7cc2, #5bb0e0); margin-right: 7px; flex: none; }

/* right dock strip */
.dock {
  flex: 1; background: linear-gradient(90deg, #9aa1bd, #cfd3e6 60%, #e0e3f0);
  display: flex; flex-direction: column; align-items: center;
}
.dock-ic { width: 22px; height: 22px; margin-top: 5px; flex: none; }
.dock-label { margin-top: 6px; writing-mode: vertical-rl; text-orientation: sideways; font-size: 11px; line-height: 12px; color: #333; letter-spacing: -1px; }

/* recording highlight */
.spot { position: absolute; left: 956px; top: 60px; width: 66px; height: 66px; border-radius: 50%; background: #ffff00; mix-blend-mode: multiply; }
.cursor { position: absolute; left: 986px; top: 93px; width: 14px; height: 22px; }
```
